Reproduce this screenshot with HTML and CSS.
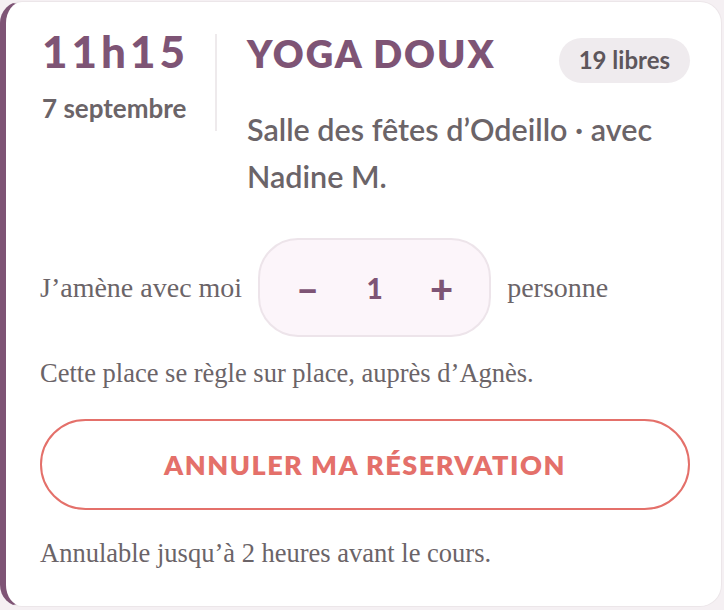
FILE: index.html
```html
<!DOCTYPE html>
<html lang="fr">
  <head>
    <meta charset="utf-8">
    <title>Réservation</title>
    <link rel="stylesheet" href="styles.css">
  </head>
  <body>
    <div class="card">
      <div class="head">
        <div class="when">
          <div class="time">11h15</div>
          <div class="date">7 septembre</div>
        </div>
        <div class="what">
          <div class="title-row">
            <h2 class="title">Yoga doux</h2>
            <span class="badge">19 libres</span>
          </div>
          <p class="place">Salle des fêtes d’Odeillo · avec Nadine M.</p>
        </div>
      </div>
      <div class="guests">
        <span>J’amène avec moi</span>
        <div class="stepper">
          <button class="step">–</button>
          <span class="count">1</span>
          <button class="step">+</button>
        </div>
        <span>personne</span>
      </div>
      <p class="note first">Cette place se règle sur place, auprès d’Agnès.</p>
      <button class="cancel">Annuler ma réservation</button>
      <p class="note last">Annulable jusqu’à 2 heures avant le cours.</p>
    </div>
  </body>
</html>
```

FILE: styles.css
```css
body {
  margin: 0;
  padding: 1px 2px 2px 0;
  background-color: #f5f0f3;
  font-family: "Liberation Serif", serif;
  color: #6b6468;
}

p, h2, button {
  margin: 0;
  padding: 0;
}

.card {
  box-sizing: border-box;
  height: 606px;
  padding: 32px 31px 0 34px;
  background-color: #fff;
  border: 1px solid #ece6e9;
  border-left: 6px solid #7e5475;
  border-radius: 22px;
}

/* header */

.head {
  display: flex;
}

.when {
  align-self: flex-start;
  width: 175px;
  padding-bottom: 8px;
  border-right: 2px solid #eeeaec;
  font-family: Lato, sans-serif;
}

.time {
  padding-left: 2px;
  font-size: 44px;
  font-weight: 900;
  line-height: 34px;
  letter-spacing: 4px;
  color: #7e5475;
}

.date {
  margin-top: 25px;
  padding-left: 2px;
  font-size: 26px;
  font-weight: 700;
  line-height: 30px;
  color: #6b6468;
}

.what {
  flex: 1;
  padding-left: 30px;
  font-family: Lato, sans-serif;
}

.title-row {
  display: flex;
  justify-content: space-between;
  align-items: flex-start;
}

.title {
  font-size: 38px;
  font-weight: 800;
  line-height: 38px;
  letter-spacing: 2px;
  text-transform: uppercase;
  color: #7e5475;
}

.badge {
  margin-top: 4px;
  padding: 9px 20px 11px;
  font-size: 24px;
  font-weight: 700;
  line-height: 25px;
  color: #5d565b;
  background-color: #efebee;
  border-radius: 23px;
}

.place {
  margin-top: 23px;
  font-size: 30.5px;
  font-weight: 600;
  line-height: 47px;
  color: #6b6468;
}

/* guests */

.guests {
  display: flex;
  align-items: center;
  gap: 16px;
  margin-top: 38px;
  font-size: 28px;
}

.stepper {
  box-sizing: border-box;
  display: flex;
  align-items: center;
  height: 99px;
  padding: 0 14px;
  background-color: #fcf5fa;
  border: 2px solid #ede4ea;
  border-radius: 40px;
}

.step, .count {
  width: 67px;
  text-align: center;
  font-family: Lato, sans-serif;
  font-size: 28px;
  font-weight: 900;
  line-height: 40px;
  color: #7e5475;
}

.step {
  font-size: 40px;
  background: none;
  border: none;
  cursor: pointer;
}

/* notes and action */

.note {
  font-size: 26.5px;
  line-height: 36px;
}

.note.first {
  margin-top: 18px;
}

.note.last {
  margin-top: 25px;
}

.cancel {
  display: block;
  box-sizing: border-box;
  width: 100%;
  height: 91px;
  margin-top: 28px;
  font-family: Lato, sans-serif;
  font-size: 27px;
  font-weight: 800;
  letter-spacing: 1.5px;
  text-transform: uppercase;
  color: #e4706a;
  background: #fff;
  border: 2px solid #e4706a;
  border-radius: 46px;
  cursor: pointer;
}
```
